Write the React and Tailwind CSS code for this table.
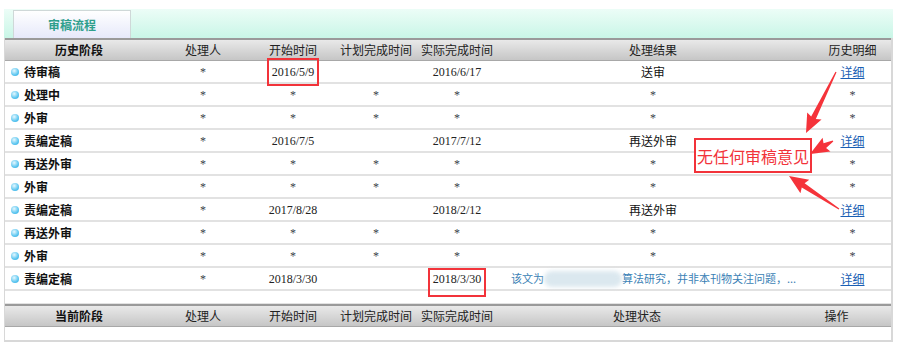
import React from "react";

const COLS = "grid grid-cols-[148px_100px_80px_86px_76px_316px_83px]";
const CJK = { fontFamily: '"Noto Sans CJK SC", sans-serif' };

const rows = [
  ["待审稿", "*", "2016/5/9", "", "2016/6/17", "送审", "详细"],
  ["处理中", "*", "*", "*", "*", "*", "*"],
  ["外审", "*", "*", "*", "*", "*", "*"],
  ["责编定稿", "*", "2016/7/5", "", "2017/7/12", "再送外审", "详细"],
  ["再送外审", "*", "*", "*", "*", "*", "*"],
  ["外审", "*", "*", "*", "*", "*", "*"],
  ["责编定稿", "*", "2017/8/28", "", "2018/2/12", "再送外审", "详细"],
  ["再送外审", "*", "*", "*", "*", "*", "*"],
  ["外审", "*", "*", "*", "*", "*", "*"],
  ["责编定稿", "*", "2018/3/30", "", "2018/3/30", "NOTE", "详细"],
];

function Cell({ v }) {
  if (v === "*")
    return <span className="text-[12px] leading-none text-[#3a3f4a] font-['Liberation_Serif',serif]">*</span>;
  if (v === "详细")
    return <span className="text-[12px] text-[#1a5fb4] underline whitespace-nowrap">详细</span>;
  if (/^\d/.test(v))
    return <span className="text-[12px] text-[#222] whitespace-nowrap font-['Liberation_Serif',serif]">{v}</span>;
  if (v === "NOTE")
    return (
      <span className="flex items-center text-[11px] text-[#3a7fb5] whitespace-nowrap w-full pl-[16px]">
        <span>该文为</span>
        <span className="w-[78px] h-[16px] rounded-full bg-[#dbe8ef] blur-[2px]"></span>
        <span>算法研究，并非本刊物关注问题，...</span>
      </span>
    );
  return <span className="text-[12px] text-[#111] whitespace-nowrap">{v}</span>;
}

function Arrow({ x1, y1, x2, y2 }) {
  const dx = x2 - x1, dy = y2 - y1;
  const L = Math.hypot(dx, dy);
  const ux = dx / L, uy = dy / L;
  const nx = -uy, ny = ux;
  const hl = 17, hw = 8, sw0 = 0.6, sw1 = 2.6;
  const bx = x2 - ux * hl, by = y2 - uy * hl;
  const p = [
    [x1 + nx * sw0, y1 + ny * sw0],
    [bx + nx * sw1, by + ny * sw1],
    [bx + nx * hw - ux * 2, by + ny * hw - uy * 2],
    [x2, y2],
    [bx - nx * hw - ux * 2, by - ny * hw - uy * 2],
    [bx - nx * sw1, by - ny * sw1],
    [x1 - nx * sw0, y1 - ny * sw0],
  ];
  return <polygon points={p.map((q) => q.join(",")).join(" ")} fill="#f5333a" />;
}

function Head({ labels, cols }) {
  return (
    <div className={`${cols} h-[23px] items-center bg-gradient-to-b from-[#e9e9e9] to-[#c6c6c6] border-t-2 border-[#9a9a9a] border-b border-b-[#a8a8a8] text-[12px] text-[#222] whitespace-nowrap`}>
      {labels.map((l, i) => (
        <div key={i} className={`text-center ${i === 0 ? "font-bold text-[#111]" : ""}`}>{l}</div>
      ))}
    </div>
  );
}

export default function App() {
  return (
    <div className="relative w-[900px] h-[347px] bg-white overflow-hidden" style={CJK}>
      <div className="pt-[9px] px-[4px]">
        <div className="h-[29px] w-[889px] bg-gradient-to-b from-[#ecfdf7] to-[#c9f6e7] flex items-end pl-[9px]">
          <div className="w-[118px] h-[28px] border border-b-0 border-[#cfd8d8] bg-gradient-to-b from-[#ffffff] to-[#e6e9fa] flex items-center justify-center">
            <span className="text-[12px] font-bold text-[#2f9f8c]">审稿流程</span>
          </div>
        </div>
        <div className="w-[889px] border-l border-r-2 border-[#d8d8d8] border-b-2">
          <Head cols={COLS} labels={["历史阶段", "处理人", "开始时间", "计划完成时间", "实际完成时间", "处理结果", "历史明细"]} />
          {rows.map((r, i) => (
            <div key={i} className={`${COLS} h-[23px] items-center border-b-2 border-[#e2e2e2]`}>
              <div className="flex items-center pl-[6px] gap-[5px]">
                <span className="w-[8px] h-[8px] rounded-full bg-[radial-gradient(circle_at_40%_35%,#e6f8ff,#5cc6f0_60%,#2aa6df)]"></span>
                <span className="text-[12px] font-bold text-[#111] whitespace-nowrap">{r[0]}</span>
              </div>
              {r.slice(1).map((v, j) => (
                <div key={j} className="flex justify-center items-center">
                  <Cell v={v} />
                </div>
              ))}
            </div>
          ))}
          <div className="h-[13px] border-b border-[#e2e2e2]"></div>
          <Head cols="grid grid-cols-[148px_100px_80px_86px_76px_284px_115px]" labels={["当前阶段", "处理人", "开始时间", "计划完成时间", "实际完成时间", "处理状态", "操作"]} />
          <div className="h-[13px]"></div>
        </div>
      </div>

      <div className="absolute left-[267px] top-[58px] w-[52px] h-[28px] border-2 border-[#f2333a]"></div>
      <div className="absolute left-[428px] top-[268px] w-[58px] h-[29px] border-2 border-[#f2333a]"></div>

      <div className="absolute left-[694px] top-[138px] w-[118px] h-[35px] border-2 border-[#f2333a] bg-white flex items-center justify-center">
        <span className="text-[16px] text-[#f2333a] leading-none whitespace-nowrap">无任何审稿意见</span>
      </div>

      <svg className="absolute left-0 top-0 pointer-events-none" width="900" height="347">
        <Arrow x1={836} y1={72} x2={806} y2={133} />
        <Arrow x1={833} y1={141} x2={810} y2={154} />
        <Arrow x1={839} y1={209} x2={789} y2={176} />
      </svg>
    </div>
  );
}
